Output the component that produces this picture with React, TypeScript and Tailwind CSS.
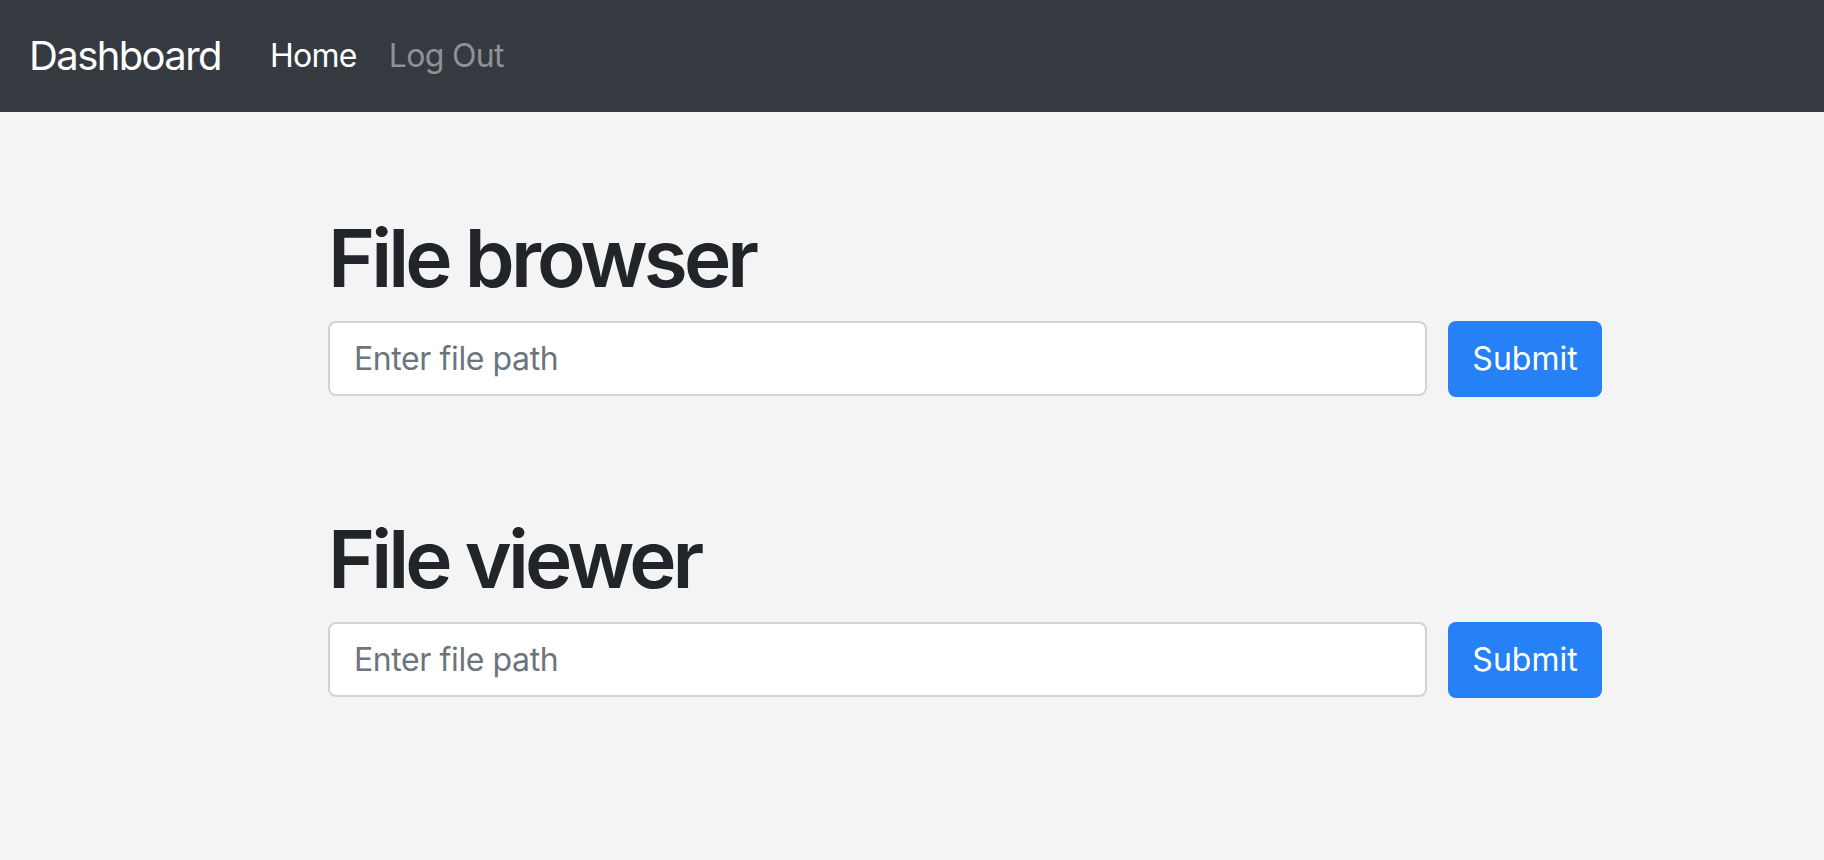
import React from "react";

function PathForm({ title, first }: { title: string; first?: boolean }) {
  return (
    <section className={first ? "" : "mt-[114px]"}>
      <h1 className="text-[80px] leading-[96px] font-semibold tracking-[-3.9px] text-[#212529] mb-[15px]">{title}</h1>
      <form className="flex gap-[21px]" onSubmit={(e) => e.preventDefault()}>
        <input
          type="text"
          placeholder="Enter file path"
          className="flex-1 h-[75px] bg-white border-2 border-[#ced4da] rounded-[8px] px-[24px] text-[32px] tracking-[-0.4px] text-[#495057] placeholder:text-[#6c757d] outline-none"
        />
        <button
          type="submit"
          className="w-[154px] h-[76px] bg-[#2680f6] text-white text-[32px] rounded-[8px]"
        >
          Submit
        </button>
      </form>
    </section>
  );
}

export default function App() {
  return (
    <div className="min-h-screen bg-[#f4f4f4] font-['Inter',sans-serif]">
      <nav className="h-[112px] bg-[#343a40] flex items-center pl-[29px]">
        <a className="text-[40px] leading-[60px] text-white tracking-[-1.6px]">Dashboard</a>
        <div className="flex items-center ml-[49px] gap-[32px] text-[32px] leading-[48px] tracking-[-0.7px]">
          <a className="text-white">Home</a>
          <a className="text-[#8e9195]">Log Out</a>
        </div>
      </nav>
      <main className="ml-[328px] w-[1274px] pt-[98px]">
        <PathForm title="File browser" first />
        <PathForm title="File viewer" />
      </main>
    </div>
  );
}
